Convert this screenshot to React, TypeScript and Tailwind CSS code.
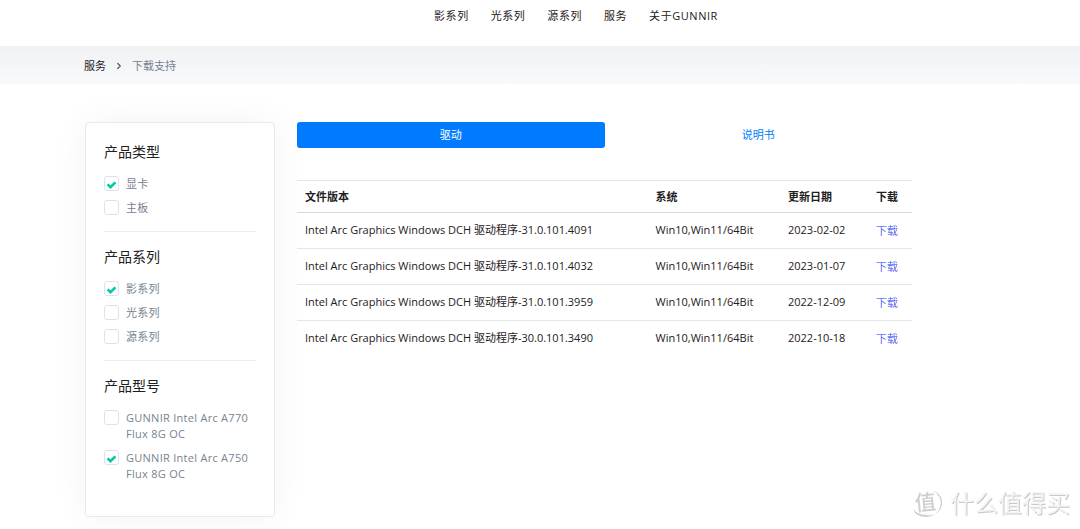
import React, { useState } from 'react';
import { ChevronRight } from 'lucide-react';

const navItems = ['影系列', '光系列', '源系列', '服务', '关于GUNNIR'];

const filterGroups = [
    { title: '产品类型', options: ['显卡', '主板'] },
    { title: '产品系列', options: ['影系列', '光系列', '源系列'] },
    { title: '产品型号', options: ['GUNNIR Intel Arc A770 Flux 8G OC', 'GUNNIR Intel Arc A750 Flux 8G OC'] },
];

const drivers = [
    { name: 'Intel Arc Graphics Windows DCH 驱动程序-31.0.101.4091', system: 'Win10,Win11/64Bit', date: '2023-02-02' },
    { name: 'Intel Arc Graphics Windows DCH 驱动程序-31.0.101.4032', system: 'Win10,Win11/64Bit', date: '2023-01-07' },
    { name: 'Intel Arc Graphics Windows DCH 驱动程序-31.0.101.3959', system: 'Win10,Win11/64Bit', date: '2022-12-09' },
    { name: 'Intel Arc Graphics Windows DCH 驱动程序-30.0.101.3490', system: 'Win10,Win11/64Bit', date: '2022-10-18' },
];

const Header: React.FC = () => (
    <header className="h-[46px] pl-[72px]">
        <nav className="flex justify-center gap-[22px] pt-2 leading-4 tracking-wider">
            {navItems.map((item) => (
                <a key={item} href="#" className="hover:text-[#007bff]">{item}</a>
            ))}
        </nav>
    </header>
);

const Breadcrumb: React.FC = () => (
    <nav aria-label="breadcrumb" className="flex h-[38px] items-center gap-2 bg-gradient-to-b from-[#f0f1f3] to-[#f9fafb] px-[84px] pt-px">
        <a href="#">服务</a>
        <ChevronRight className="size-[10px] text-[#555b63]" strokeWidth={3} />
        <span className="text-[#77838f]">下载支持</span>
    </nav>
);

const FilterOption: React.FC<{ label: string; checked: boolean; onChange: () => void }> = ({ label, checked, onChange }) => (
    <label className="flex items-start gap-[7px] leading-4 tracking-wide text-[#77838f]">
        <span className="grid shrink-0">
            <input
                type="checkbox"
                checked={checked}
                onChange={onChange}
                className="peer col-start-1 row-start-1 size-[15px] appearance-none rounded-[3px] border border-[#dfe0ec] bg-white"
            />
            <svg viewBox="0 0 15 15" className="pointer-events-none col-start-1 row-start-1 hidden size-[15px] peer-checked:block">
                <path d="M3.6 8.4 L6.5 11.2 L11.4 6.3" fill="none" stroke="#00c9a7" strokeWidth="2.6" />
            </svg>
        </span>
        <span>{label}</span>
    </label>
);

const Sidebar: React.FC = () => {
    const [selected, setSelected] = useState(['显卡', '影系列', 'GUNNIR Intel Arc A750 Flux 8G OC']);

    const toggle = (option: string) => {
        setSelected((prev) => (prev.includes(option) ? prev.filter((o) => o !== option) : [...prev, option]));
    };

    return (
        <aside className="rounded-[4px] border border-[#e7eaf3] bg-white px-[18px] pt-[19px] pb-[34px] shadow-[0_0_35px_rgba(0,0,0,0.05)]">
            {filterGroups.map((group) => (
                <fieldset key={group.title} className="mb-[15px] border-b border-[#ededf0] pb-[15px] last:mb-0 last:border-b-0 last:pb-0">
                    <legend className="mb-[14px] text-sm leading-5">{group.title}</legend>
                    <div className="flex flex-col gap-2">
                        {group.options.map((option) => (
                            <FilterOption
                                key={option}
                                label={option}
                                checked={selected.includes(option)}
                                onChange={() => toggle(option)}
                            />
                        ))}
                    </div>
                </fieldset>
            ))}
        </aside>
    );
};

const DriverTable: React.FC = () => (
    <table className="mt-8 w-full table-fixed text-left">
        <thead>
            <tr className="h-8 border-t border-b border-t-[#e4e6ea] border-b-[#d5d8dd]">
                <th className="w-[57%] px-2 font-bold">文件版本</th>
                <th className="px-2 font-bold">系统</th>
                <th className="w-[88px] px-2 font-bold">更新日期</th>
                <th className="w-11 px-2 font-bold">下载</th>
            </tr>
        </thead>
        <tbody>
            {drivers.map((driver) => (
                <tr key={driver.name} className="h-9 border-b border-[#e4e6ea] last:border-b-0">
                    <td className="px-2 pb-[2px]">{driver.name}</td>
                    <td className="px-2 pb-[2px]">{driver.system}</td>
                    <td className="px-2 pb-[2px]">{driver.date}</td>
                    <td className="px-2">
                        <a href="#" className="bg-gradient-to-b from-[#377dff] to-[#6a4fe0] bg-clip-text text-transparent">下载</a>
                    </td>
                </tr>
            ))}
        </tbody>
    </table>
);

const Downloads: React.FC = () => {
    const [tab, setTab] = useState('驱动');

    return (
        <section className="min-w-0">
            <div className="grid grid-cols-2">
                {['驱动', '说明书'].map((name) => (
                    <button
                        key={name}
                        type="button"
                        onClick={() => setTab(name)}
                        className={`h-[26px] rounded-[3px] ${tab === name ? 'bg-[#007bff] text-white' : 'text-[#007bff]'}`}
                    >
                        {name}
                    </button>
                ))}
            </div>
            <DriverTable />
        </section>
    );
};

const Watermark: React.FC = () => (
    <div className="pointer-events-none fixed right-[10px] bottom-[10px] flex items-center gap-2 text-[#cfcfcf]">
        <svg viewBox="0 0 32 32" className="size-8">
            <path d="M23 3.5 A14 14 0 0 1 16 30 Q6 30 3 22 Q8 28 16 27.8 A12 12 0 0 0 23 3.5Z" fill="currentColor" />
            <text x="5" y="23" fontSize="21" fontWeight="500" transform="rotate(-6 15 16)" fill="currentColor">值</text>
        </svg>
        <span className="text-2xl leading-8 text-[#f4f4f4] [text-shadow:1px_1px_0_#c8c8c8]">什么值得买</span>
    </div>
);

const App: React.FC = () => (
    <div className="bg-white font-['Open_Sans','Noto_Sans_CJK_SC',sans-serif] text-[11px] leading-4 text-[#1e2022]">
        <Header />
        <Breadcrumb />
        <main className="grid grid-cols-[190px_1fr] items-start gap-[22px] pt-[38px] pr-[168px] pb-3 pl-[85px]">
            <Sidebar />
            <Downloads />
        </main>
        <Watermark />
    </div>
);

export default App;
